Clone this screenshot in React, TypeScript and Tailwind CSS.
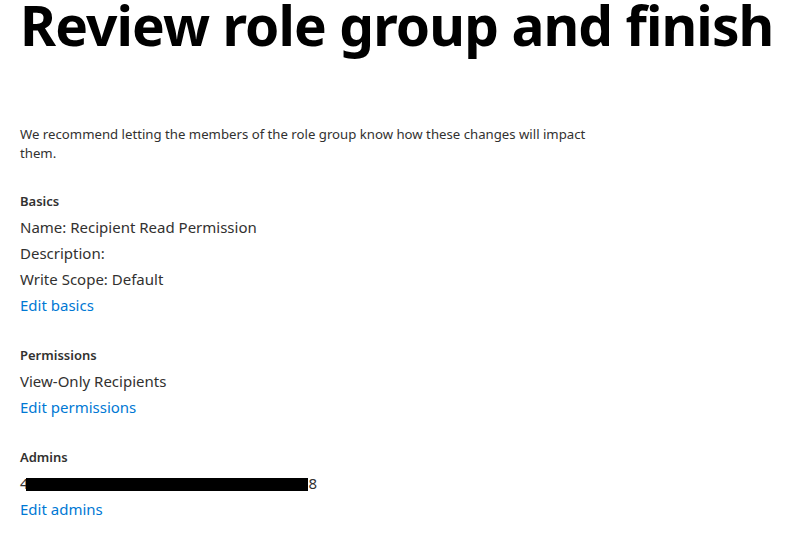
const Row: React.FC<{ children: React.ReactNode; link?: boolean; label?: boolean }> = ({ children, link, label }) => (
  <div
    className={
      label
        ? "h-[25px] leading-[25px] text-[13px] font-semibold text-[#323130]"
        : link
          ? "h-[26px] leading-[26px] text-[15px] text-[#0078d4] cursor-pointer hover:underline"
          : "h-[26px] leading-[26px] text-[15px] text-[#323130]"
    }
  >
    {children}
  </div>
);

export default function App() {
  return (
    <div className="min-h-screen bg-white px-5 font-['Noto_Sans','Open_Sans',sans-serif] text-[#323130]">
      <h1 className="whitespace-nowrap text-[55px] font-bold leading-[52px] text-black tracking-[-0.9px] -mt-[1px]">
        Review role group and finish
      </h1>

      <p className="mt-[74px] max-w-[592px] text-[13.2px] leading-[19px]">
        We recommend letting the members of the role group know how these changes will impact them.
      </p>

      <div className="mt-[26px]">
        <Row label>Basics</Row>
        <Row>Name: Recipient Read Permission</Row>
        <Row>Description:</Row>
        <Row>Write Scope: Default</Row>
        <Row link>Edit basics</Row>
      </div>

      <div className="mt-[25px]">
        <Row label>Permissions</Row>
        <Row>View-Only Recipients</Row>
        <Row link>Edit permissions</Row>
      </div>

      <div className="mt-[25px]">
        <Row label>Admins</Row>
        <div className="relative h-[26px] leading-[26px] text-[15px] text-[#323130]">
          <span>4</span>
          <span className="inline-block w-[280px]" />
          <span>8</span>
          <span className="absolute left-[6px] top-[8px] h-[13px] w-[282px] bg-black" />
        </div>
        <Row link>Edit admins</Row>
      </div>
    </div>
  );
}
